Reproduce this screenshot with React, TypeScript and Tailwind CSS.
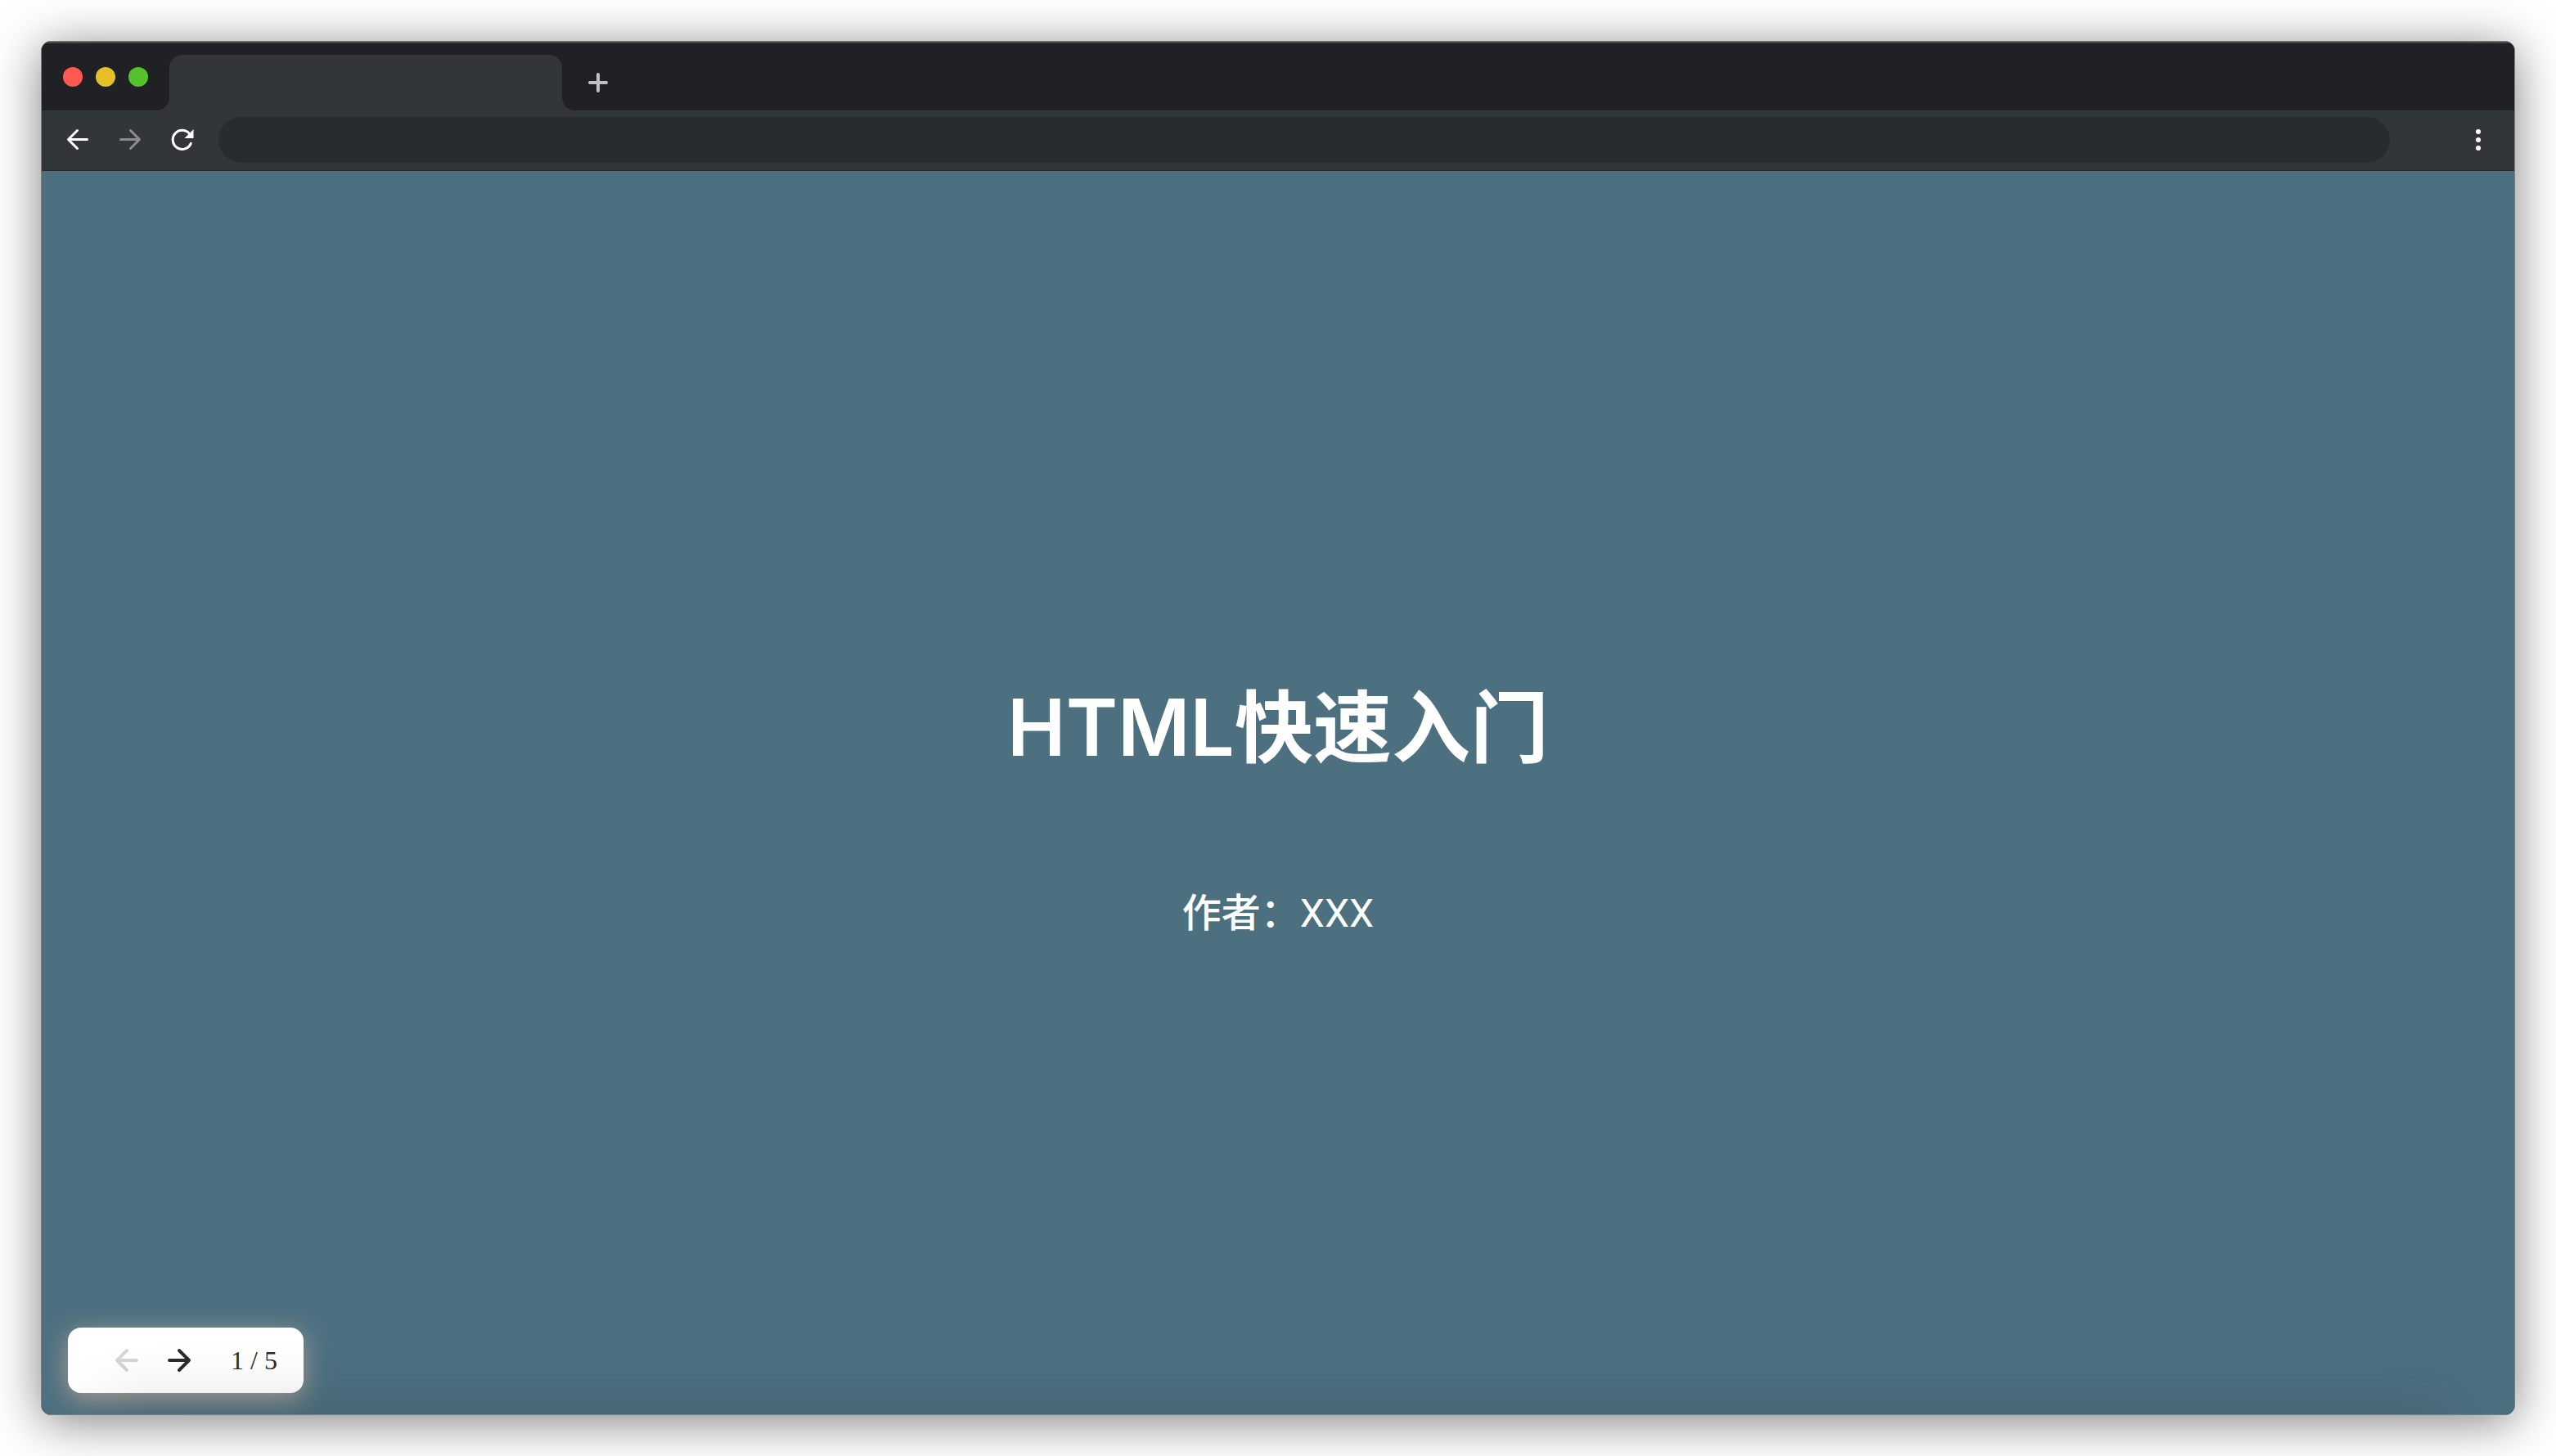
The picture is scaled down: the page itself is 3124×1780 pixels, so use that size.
import React from "react";

function BackArrow({ className }: { className?: string }) {
  return (
    <svg viewBox="0 0 32 32" className={className} fill="none" stroke="currentColor" strokeWidth="3" strokeLinecap="round" strokeLinejoin="round" aria-hidden="true">
      <path d="M27.5 15.5H5M15.5 4.5l-11 11 11 11" />
    </svg>
  );
}

function ForwardArrow({ className }: { className?: string }) {
  return (
    <svg viewBox="0 0 32 32" className={className} fill="none" stroke="currentColor" strokeWidth="3" strokeLinecap="round" strokeLinejoin="round" aria-hidden="true">
      <path d="M4.5 15.5H27M16.5 4.5l11 11-11 11" />
    </svg>
  );
}

function Reload({ className }: { className?: string }) {
  return (
    <svg viewBox="0 0 32 32" className={className} fill="none" aria-hidden="true">
      <path d="M26.3 20.3A11.5 11.5 0 1 1 24.6 8.6" stroke="currentColor" strokeWidth="3" strokeLinecap="round" />
      <path d="M29.5 3v11h-11z" fill="currentColor" />
    </svg>
  );
}

function TabStrip() {
  return (
    <div className="flex h-[84px] border-t-2 border-[#434547] bg-[#202124]">
      <div className="flex items-center gap-4 px-[26px]">
        <button aria-label="Close" className="size-6 rounded-full bg-[#ff5a52]" />
        <button aria-label="Minimize" className="size-6 rounded-full bg-[#e6c029]" />
        <button aria-label="Zoom" className="size-6 rounded-full bg-[#54c22b]" />
      </div>
      <div className="-ml-4 size-4 self-end overflow-hidden bg-[#323639]">
        <div className="size-4 rounded-br-2xl bg-[#202124]" />
      </div>
      <div className="h-[68px] w-[480px] self-end rounded-t-2xl bg-[#323639]" />
      <div className="size-4 self-end bg-[#323639]">
        <div className="size-4 rounded-bl-2xl bg-[#202124]" />
      </div>
      <button aria-label="New tab" className="ml-3 mt-8 flex size-8 items-center justify-center text-[#bdc1c6]">
        <svg viewBox="0 0 24 24" className="size-6" stroke="currentColor" strokeWidth="4" strokeLinecap="round" aria-hidden="true">
          <path d="M12 2v20M2 12h20" />
        </svg>
      </button>
    </div>
  );
}

function Toolbar() {
  return (
    <div className="flex items-center border-b border-[#28292a] bg-[#323639] pt-2 pb-[9px] pl-7">
      <div className="flex gap-8 text-white">
        <button aria-label="Back"><BackArrow className="size-8" /></button>
        <button aria-label="Forward" disabled className="text-[#8a8c8e]"><ForwardArrow className="size-8" /></button>
        <button aria-label="Reload"><Reload className="size-8" /></button>
      </div>
      <input aria-label="Address" type="text" className="ml-7 h-14 min-w-0 flex-1 rounded-full bg-[#282c2f] px-8 text-2xl text-white outline-none" />
      <button aria-label="Menu" className="ml-[92px] mr-7 text-white">
        <svg viewBox="0 0 32 32" className="size-8" fill="currentColor" aria-hidden="true">
          <circle cx="16" cy="6" r="3" />
          <circle cx="16" cy="16" r="3" />
          <circle cx="16" cy="26" r="3" />
        </svg>
      </button>
    </div>
  );
}

function Pager() {
  return (
    <nav aria-label="Slides" className="absolute bottom-[26px] left-8 flex h-20 items-center rounded-2xl bg-white pl-14 pr-8 shadow-[0_8px_32px_rgba(217,183,163,0.65)]">
      <button aria-label="Previous slide" disabled className="text-[#d6d6d6]">
        <svg viewBox="0 0 32 32" className="size-8" fill="none" stroke="currentColor" strokeWidth="4" strokeLinecap="round" strokeLinejoin="round" aria-hidden="true">
          <path d="M28 16H4M16 4L4 16l12 12" />
        </svg>
      </button>
      <button aria-label="Next slide" className="ml-8 text-[#2c2c2e]">
        <svg viewBox="0 0 32 32" className="size-8" fill="none" stroke="currentColor" strokeWidth="4" strokeLinecap="round" strokeLinejoin="round" aria-hidden="true">
          <path d="M4 16h24M16 4l12 12-12 12" />
        </svg>
      </button>
      <span className="ml-[47px] whitespace-nowrap font-['Liberation_Serif',serif] text-[32px] leading-10 text-[#2c2c2e]">1 / 5</span>
    </nav>
  );
}

export default function App() {
  return (
    <div className="flex min-h-screen bg-white p-[50px]">
      <div className="flex min-w-0 flex-1 flex-col overflow-hidden rounded-xl border border-[#7c7c7c] bg-[#202124] shadow-[0_8px_60px_rgba(0,0,0,0.5)]">
        <TabStrip />
        <Toolbar />
        <main className="relative flex flex-1 flex-col items-center justify-center overflow-hidden bg-[#4d7080] pt-8 text-white">
          <h1 className="font-['Inter','Noto_Sans_CJK_SC',sans-serif] text-[96px] font-semibold leading-[144px]">HTML快速入门</h1>
          <p className="mt-[120px] font-['Roboto','Noto_Sans_CJK_SC',sans-serif] text-5xl font-medium leading-[72px]">
            作者：<span className="font-normal">XXX</span>
          </p>
          <Pager />
          <div className="pointer-events-none absolute inset-x-20 top-full h-10 shadow-[0_0_80px_rgba(30,45,35,0.3)]" />
        </main>
      </div>
    </div>
  );
}
